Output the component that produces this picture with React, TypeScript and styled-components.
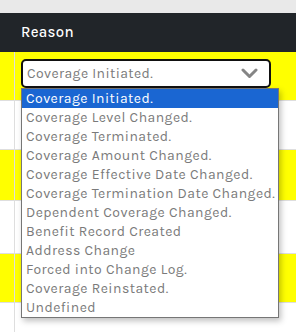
import React from "react";
import styled, { createGlobalStyle } from "styled-components";

const GlobalStyle = createGlobalStyle`
  html, body {
    margin: 0;
    padding: 0;
    background: #ffffff;
    font-family: "Karla", "Open Sans", "Noto Sans", sans-serif;
    overflow: hidden;
  }
`;

const reasons = [
  "Coverage Initiated.",
  "Coverage Level Changed.",
  "Coverage Terminated.",
  "Coverage Amount Changed.",
  "Coverage Effective Date Changed.",
  "Coverage Termination Date Changed.",
  "Dependent Coverage Changed.",
  "Benefit Record Created",
  "Address Change",
  "Forced into Change Log.",
  "Coverage Reinstated.",
  "Undefined",
];

const Page = styled.div`
  width: 296px;
  height: 332px;
  overflow: hidden;
  background: #ffffff;
`;

const TopStrip = styled.div`
  height: 13px;
  background: #e9e9e9;
`;

const Table = styled.div`
  display: flex;
  flex-direction: column;
`;

const HeaderRow = styled.div`
  display: flex;
  height: 39px;
  background: #212529;
`;

const HeaderCell = styled.div`
  display: flex;
  align-items: center;
  padding: 0 0 1px 6px;
  color: #ffffff;
  font-size: 15px;
  font-weight: 500;
  letter-spacing: 0.3px;
`;

const Row = styled.div<{ $striped: boolean; $height: number }>`
  display: flex;
  height: ${(p) => p.$height}px;
  background: ${(p) => (p.$striped ? "#ffff00" : "#ffffff")};
  border-bottom: 1px solid #dedede;
`;

const EdgeCell = styled.div<{ $ruled?: boolean }>`
  width: 14px;
  flex-shrink: 0;
  border-right: 1px solid ${(p) => (p.$ruled ? "#dedede" : "transparent")};
`;

const Cell = styled.div`
  flex: 1;
  padding: 7px 0 0 6px;
  position: relative;
`;

const SelectBox = styled.div`
  box-sizing: border-box;
  width: 250px;
  height: 29px;
  border: 2px solid #111111;
  border-radius: 5px;
  background: #ffffff;
  display: flex;
  align-items: center;
  justify-content: space-between;
  padding: 0 11px 0 4px;
  color: #7a7a7a;
  font-size: 14px;
  letter-spacing: 0.4px;
`;

const Chevron = styled.svg`
  width: 17px;
  height: 11px;
`;

const OptionList = styled.ul`
  position: absolute;
  left: 6px;
  top: 36px;
  width: 258px;
  margin: 0;
  padding: 0;
  list-style: none;
  box-sizing: border-box;
  background: #ffffff;
  border: 1px solid #767676;
  box-shadow: 2px 3px 6px rgba(0, 0, 0, 0.25);
  z-index: 5;
`;

const Option = styled.li<{ $active: boolean }>`
  height: 19px;
  line-height: 19px;
  padding-left: 4px;
  font-size: 14px;
  letter-spacing: 0.45px;
  white-space: nowrap;
  color: ${(p) => (p.$active ? "#ffffff" : "#7a7a7a")};
  background: ${(p) => (p.$active ? "#1a66d2" : "transparent")};
`;

const rowHeights = [48, 48, 50, 52, 48, 40];

export default function App() {
  return (
    <>
      <GlobalStyle />
      <Page>
        <TopStrip />
        <Table>
          <HeaderRow>
            <EdgeCell />
            <HeaderCell>Reason</HeaderCell>
          </HeaderRow>
          {rowHeights.map((h, i) => (
            <Row key={i} $striped={i % 2 === 0} $height={h}>
              <EdgeCell $ruled />
              <Cell>
                {i === 0 && (
                  <>
                    <SelectBox>
                      <span>Coverage Initiated.</span>
                      <Chevron viewBox="0 0 17 11">
                        <path
                          d="M2 2 L8.5 8.5 L15 2"
                          fill="none"
                          stroke="#858585"
                          strokeWidth="3"
                          strokeLinecap="round"
                          strokeLinejoin="round"
                        />
                      </Chevron>
                    </SelectBox>
                    <OptionList>
                      {reasons.map((r, j) => (
                        <Option key={r} $active={j === 0}>
                          {r}
                        </Option>
                      ))}
                    </OptionList>
                  </>
                )}
              </Cell>
            </Row>
          ))}
        </Table>
      </Page>
    </>
  );
}
